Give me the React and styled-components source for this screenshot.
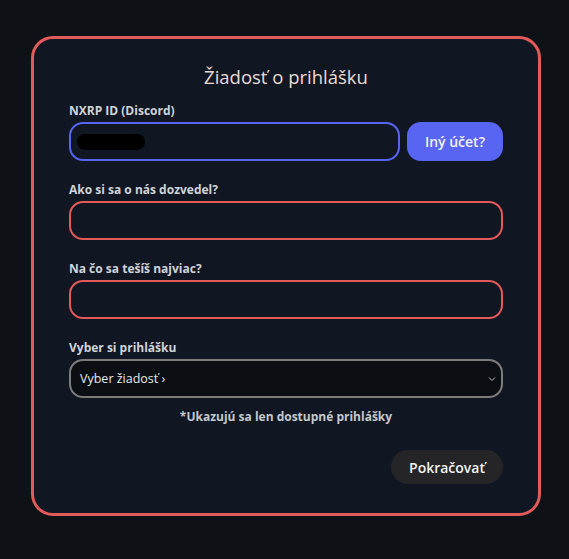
import React from "react";
import styled, { createGlobalStyle } from "styled-components";

const Global = createGlobalStyle`
  html, body { margin: 0; padding: 0; background: #0e1116; }
  body { font-family: "Open Sans", "Lato", sans-serif; }
  * { box-sizing: border-box; }
`;

const Page = styled.div`
  width: 569px;
  height: 559px;
  padding: 36px 28px 0 31px;
`;

const Card = styled.form`
  width: 510px;
  height: 480px;
  border: 3px solid #e35a5a;
  border-radius: 22px;
  background: #111722;
  padding: 25px 35px 0 35px;
  display: flex;
  flex-direction: column;
`;

const Title = styled.h2`
  margin: 0 0 13px;
  text-align: center;
  font-size: 18.5px;
  line-height: 26px;
  font-weight: 500;
  color: #eadbd4;
`;

const Label = styled.label`
  display: block;
  font-size: 12px;
  line-height: 15px;
  font-weight: 700;
  color: #cfd3da;
  margin-bottom: 4px;
`;

const Field = styled.div`
  margin-bottom: 21px;
`;

const Row = styled.div`
  display: flex;
  gap: 7px;
`;

const InputBox = styled.div`
  flex: 1;
  height: 39px;
  border: 2px solid ${(p) => p.$color};
  border-radius: 14px;
  background: ${(p) => p.$bg || "#111722"};
  display: flex;
  align-items: center;
  padding: 0 6px;
  color: #e8e8e8;
  font-size: 12.5px;
`;

const Redacted = styled.span`
  width: 68px;
  height: 16px;
  background: #000;
  border-radius: 8px;
`;

const SelectText = styled.span`
  flex: 1;
  padding-left: 3px;
`;

const Chevron = styled.svg`
  width: 8px;
  height: 8px;
  margin-right: -1px;
`;

const Button = styled.button`
  border: none;
  border-radius: ${(p) => p.$radius}px;
  background: ${(p) => p.$bg};
  color: #f2f2f2;
  font-family: inherit;
  font-size: 14px;
  font-weight: 600;
  padding: 0 18px;
  height: ${(p) => p.$h}px;
`;

const Note = styled.p`
  margin: -10px 0 0;
  text-align: center;
  font-size: 12px;
  line-height: 15px;
  font-weight: 700;
  color: #c3c8cf;
`;

const Footer = styled.div`
  display: flex;
  justify-content: flex-end;
  margin-top: 26px;
`;

export default function App() {
  return (
    <Page>
      <Global />
      <Card>
        <Title>Žiadosť o prihlášku</Title>
        <Field>
          <Label>NXRP ID (Discord)</Label>
          <Row>
            <InputBox $color="#5865f2">
              <Redacted />
            </InputBox>
            <Button type="button" $bg="#5865f2" $radius={14} $h={39}>Iný účet?</Button>
          </Row>
        </Field>
        <Field>
          <Label>Ako si sa o nás dozvedel?</Label>
          <InputBox $color="#e35a5a" />
        </Field>
        <Field>
          <Label>Na čo sa tešíš najviac?</Label>
          <InputBox $color="#e35a5a" />
        </Field>
        <Field>
          <Label>Vyber si prihlášku</Label>
          <InputBox $color="#7c7c7c" $bg="#0b0f14">
            <SelectText>Vyber žiadosť ›</SelectText>
            <Chevron viewBox="0 0 8 8">
              <path d="M1 2.5 L4 5.5 L7 2.5" fill="none" stroke="#bbb" strokeWidth="1" />
            </Chevron>
          </InputBox>
        </Field>
        <Note>*Ukazujú sa len dostupné prihlášky</Note>
        <Footer>
          <Button type="button" $bg="#252528" $radius={17} $h={34}>Pokračovať</Button>
        </Footer>
      </Card>
    </Page>
  );
}
